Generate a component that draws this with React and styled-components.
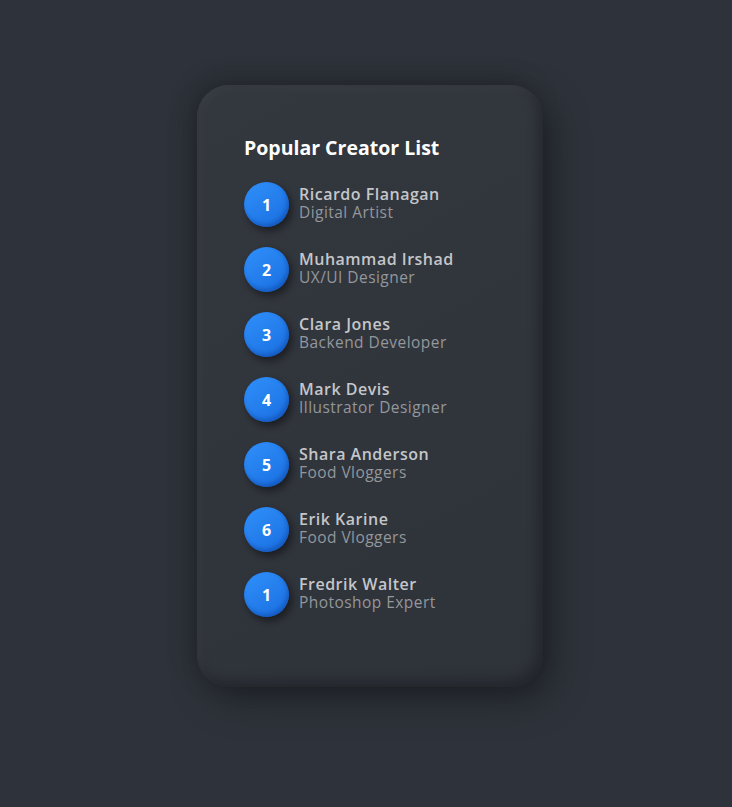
import React from 'react';
import styled, { createGlobalStyle } from 'styled-components';

const GlobalStyle = createGlobalStyle`
  html, body {
    margin: 0;
    padding: 0;
    background: #2e333b;
    font-family: "Open Sans", "Noto Sans", "Liberation Sans", sans-serif;
  }
`;

const Page = styled.div`
  min-height: 807px;
  display: flex;
  justify-content: center;
  padding: 85px 0 0 8px;
  box-sizing: border-box;
`;

const Card = styled.section`
  width: 346px;
  height: 602px;
  box-sizing: border-box;
  padding: 48px 0 0 47px;
  border-radius: 32px;
  background: linear-gradient(150deg, #33373e, #2e3239);
  box-shadow:
    10px 14px 36px rgba(0, 0, 0, 0.34),
    -6px -6px 24px rgba(0, 0, 0, 0.2),
    inset -5px -6px 12px rgba(0, 0, 0, 0.25),
    inset 4px 4px 10px rgba(255, 255, 255, 0.035);
`;

const Title = styled.h2`
  margin: 0 0 19px;
  font-size: 19.5px;
  line-height: 30px;
  font-weight: 700;
  color: #ffffff;
  letter-spacing: 0;
`;

const List = styled.ul`
  list-style: none;
  margin: 0;
  padding: 0;
  display: flex;
  flex-direction: column;
  gap: 20px;
`;

const Item = styled.li`
  display: flex;
  align-items: center;
  gap: 10px;
  height: 45px;
`;

const Rank = styled.div`
  width: 45px;
  height: 45px;
  border-radius: 50%;
  flex-shrink: 0;
  display: flex;
  align-items: center;
  justify-content: center;
  background: linear-gradient(145deg, #2f90fa, #1a6ee0);
  box-shadow: 3px 4px 7px rgba(0, 0, 0, 0.45), inset -2px -3px 4px rgba(10, 60, 150, 0.45);
  color: #fff;
  font-weight: 700;
  font-size: 16px;
`;

const Info = styled.div`
  display: flex;
  flex-direction: column;
  margin-top: -3px;
`;

const Name = styled.span`
  font-size: 16px;
  line-height: 18px;
  font-weight: 600;
  color: #c4c6ca;
  letter-spacing: 0.5px;
`;

const Role = styled.span`
  font-size: 15.5px;
  line-height: 18px;
  font-weight: 400;
  color: #94979c;
  letter-spacing: 0.45px;
`;

const creators = [
  { rank: 1, name: 'Ricardo Flanagan', role: 'Digital Artist' },
  { rank: 2, name: 'Muhammad Irshad', role: 'UX/UI Designer' },
  { rank: 3, name: 'Clara Jones', role: 'Backend Developer' },
  { rank: 4, name: 'Mark Devis', role: 'Illustrator Designer' },
  { rank: 5, name: 'Shara Anderson', role: 'Food Vloggers' },
  { rank: 6, name: 'Erik Karine', role: 'Food Vloggers' },
  { rank: 1, name: 'Fredrik Walter', role: 'Photoshop Expert' },
];

const App = () => (
  <>
    <GlobalStyle />
    <Page>
      <Card>
        <Title>Popular Creator List</Title>
        <List>
          {creators.map((c) => (
            <Item key={c.name}>
              <Rank>{c.rank}</Rank>
              <Info>
                <Name>{c.name}</Name>
                <Role>{c.role}</Role>
              </Info>
            </Item>
          ))}
        </List>
      </Card>
    </Page>
  </>
);

export default App;
